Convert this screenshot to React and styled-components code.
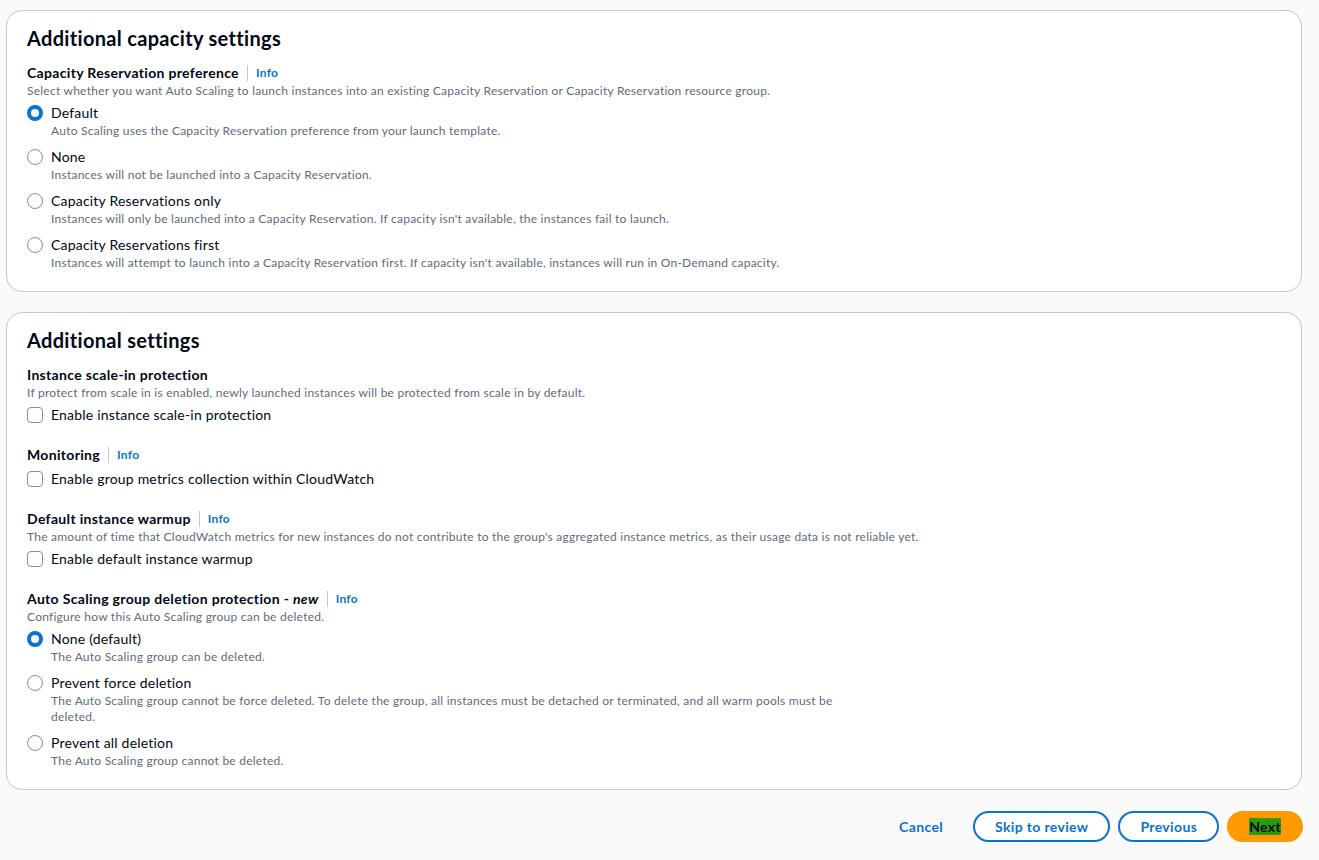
import React from "react";
import styled, { createGlobalStyle } from "styled-components";

const Global = createGlobalStyle`
  html, body { margin: 0; padding: 0; background: #fafafa; }
  body { font-family: Lato, "Open Sans", sans-serif; color: #000716; }
  * { box-sizing: border-box; }
`;

const Page = styled.div`
  padding: 10px 17px 19px 6px;
  display: flex;
  flex-direction: column;
  gap: 20px;
`;

const Card = styled.section`
  background: #fff;
  border: 1px solid #c6c6cd;
  border-radius: 16px;
  padding: 15px 20px 20px 20px;
  display: flex;
  flex-direction: column;
`;

const Heading = styled.h2`
  margin: 0 0 13px 0;
  font-size: 20px;
  line-height: 24px;
  font-weight: 700;
  letter-spacing: 0.32px;
`;

const Fields = styled.div`
  display: flex;
  flex-direction: column;
  gap: 20px;
`;

const Field = styled.div`
  display: flex;
  flex-direction: column;
`;

const Label = styled.div`
  display: flex;
  align-items: center;
  font-size: 14px;
  line-height: 20px;
  font-weight: 700;
  letter-spacing: 0.33px;
`;

const InfoLink = styled.span`
  display: inline-flex;
  align-items: center;
  font-size: 12px;
  font-weight: 700;
  color: #0972d3;
  letter-spacing: 0.3px;
  &::before {
    content: "";
    display: inline-block;
    width: 1px;
    height: 16px;
    background: #c6c6cd;
    margin: 0 8px 0 8px;
  }
`;

const Desc = styled.div`
  font-size: 12px;
  line-height: 16px;
  color: #5f6b7a;
  letter-spacing: 0.24px;
  max-width: ${(p) => p.$max || "none"};
`;

const Controls = styled.div`
  margin-top: 4px;
  display: flex;
  flex-direction: column;
  gap: 8px;
`;

const Option = styled.label`
  display: grid;
  grid-template-columns: 16px 1fr;
  column-gap: 8px;
  align-items: start;
`;

const Radio = styled.span`
  width: 16px;
  height: 16px;
  margin-top: 2px;
  border-radius: 50%;
  background: #fff;
  border: ${(p) => (p.$checked ? "4px solid #0972d3" : "1.5px solid #8c8c94")};
`;

const Check = styled.span`
  width: 16px;
  height: 16px;
  margin-top: 2px;
  border-radius: 4px;
  background: #fff;
  border: 1.5px solid #8c8c94;
`;

const OptionText = styled.div`
  display: flex;
  flex-direction: column;
`;

const OptionLabel = styled.div`
  font-size: 14px;
  line-height: 20px;
  letter-spacing: 0.2px;
`;

const Footer = styled.div`
  display: flex;
  justify-content: flex-end;
  align-items: center;
  gap: 8px;
  margin: 1px -1px 0 0;
`;

const Button = styled.button`
  font-family: inherit;
  font-size: 14px;
  font-weight: 700;
  line-height: 19px;
  letter-spacing: 0.35px;
  padding: 4px 20px;
  border-radius: 20px;
  cursor: pointer;
  border: 2px solid
    ${(p) => (p.$variant === "primary" ? "#ff9900" : p.$variant === "link" ? "transparent" : "#0972d3")};
  background: ${(p) => (p.$variant === "primary" ? "#ff9900" : p.$variant === "link" ? "transparent" : "#fff")};
  color: ${(p) => (p.$variant === "primary" ? "#000716" : "#0972d3")};
`;

const Highlight = styled.span`
  background: #2f9a05;
`;

const RadioGroup = ({ items }) => (
  <Controls>
    {items.map((it) => (
      <Option key={it.label}>
        <Radio $checked={it.checked} />
        <OptionText>
          <OptionLabel>{it.label}</OptionLabel>
          <Desc $max={it.max}>{it.desc}</Desc>
        </OptionText>
      </Option>
    ))}
  </Controls>
);

const CheckRow = ({ label }) => (
  <Controls>
    <Option>
      <Check />
      <OptionLabel>{label}</OptionLabel>
    </Option>
  </Controls>
);

const FieldLabel = ({ children, info }) => (
  <Label>
    <span>{children}</span>
    {info && <InfoLink>Info</InfoLink>}
  </Label>
);

export default function App() {
  return (
    <>
      <Global />
      <Page>
        <Card>
          <Heading>Additional capacity settings</Heading>
          <Field>
            <FieldLabel info>Capacity Reservation preference</FieldLabel>
            <Desc>
              Select whether you want Auto Scaling to launch instances into an existing Capacity Reservation or Capacity Reservation resource group.
            </Desc>
            <RadioGroup
              items={[
                { label: "Default", checked: true, desc: "Auto Scaling uses the Capacity Reservation preference from your launch template." },
                { label: "None", desc: "Instances will not be launched into a Capacity Reservation." },
                { label: "Capacity Reservations only", desc: "Instances will only be launched into a Capacity Reservation. If capacity isn't available, the instances fail to launch." },
                { label: "Capacity Reservations first", desc: "Instances will attempt to launch into a Capacity Reservation first. If capacity isn't available, instances will run in On-Demand capacity." },
              ]}
            />
          </Field>
        </Card>

        <Card>
          <Heading>Additional settings</Heading>
          <Fields>
            <Field>
              <FieldLabel>Instance scale-in protection</FieldLabel>
              <Desc>If protect from scale in is enabled, newly launched instances will be protected from scale in by default.</Desc>
              <CheckRow label="Enable instance scale-in protection" />
            </Field>
            <Field>
              <FieldLabel info>Monitoring</FieldLabel>
              <CheckRow label="Enable group metrics collection within CloudWatch" />
            </Field>
            <Field>
              <FieldLabel info>Default instance warmup</FieldLabel>
              <Desc>
                The amount of time that CloudWatch metrics for new instances do not contribute to the group's aggregated instance metrics, as their usage data is not reliable yet.
              </Desc>
              <CheckRow label="Enable default instance warmup" />
            </Field>
            <Field>
              <FieldLabel info>
                Auto Scaling group deletion protection - <i>new</i>
              </FieldLabel>
              <Desc>Configure how this Auto Scaling group can be deleted.</Desc>
              <RadioGroup
                items={[
                  { label: "None (default)", checked: true, desc: "The Auto Scaling group can be deleted." },
                  {
                    label: "Prevent force deletion",
                    max: "795px",
                    desc: "The Auto Scaling group cannot be force deleted. To delete the group, all instances must be detached or terminated, and all warm pools must be deleted.",
                  },
                  { label: "Prevent all deletion", desc: "The Auto Scaling group cannot be deleted." },
                ]}
              />
            </Field>
          </Fields>
        </Card>

        <Footer>
          <Button $variant="link">Cancel</Button>
          <Button>Skip to review</Button>
          <Button>Previous</Button>
          <Button $variant="primary">
            <Highlight>Next</Highlight>
          </Button>
        </Footer>
      </Page>
    </>
  );
}
